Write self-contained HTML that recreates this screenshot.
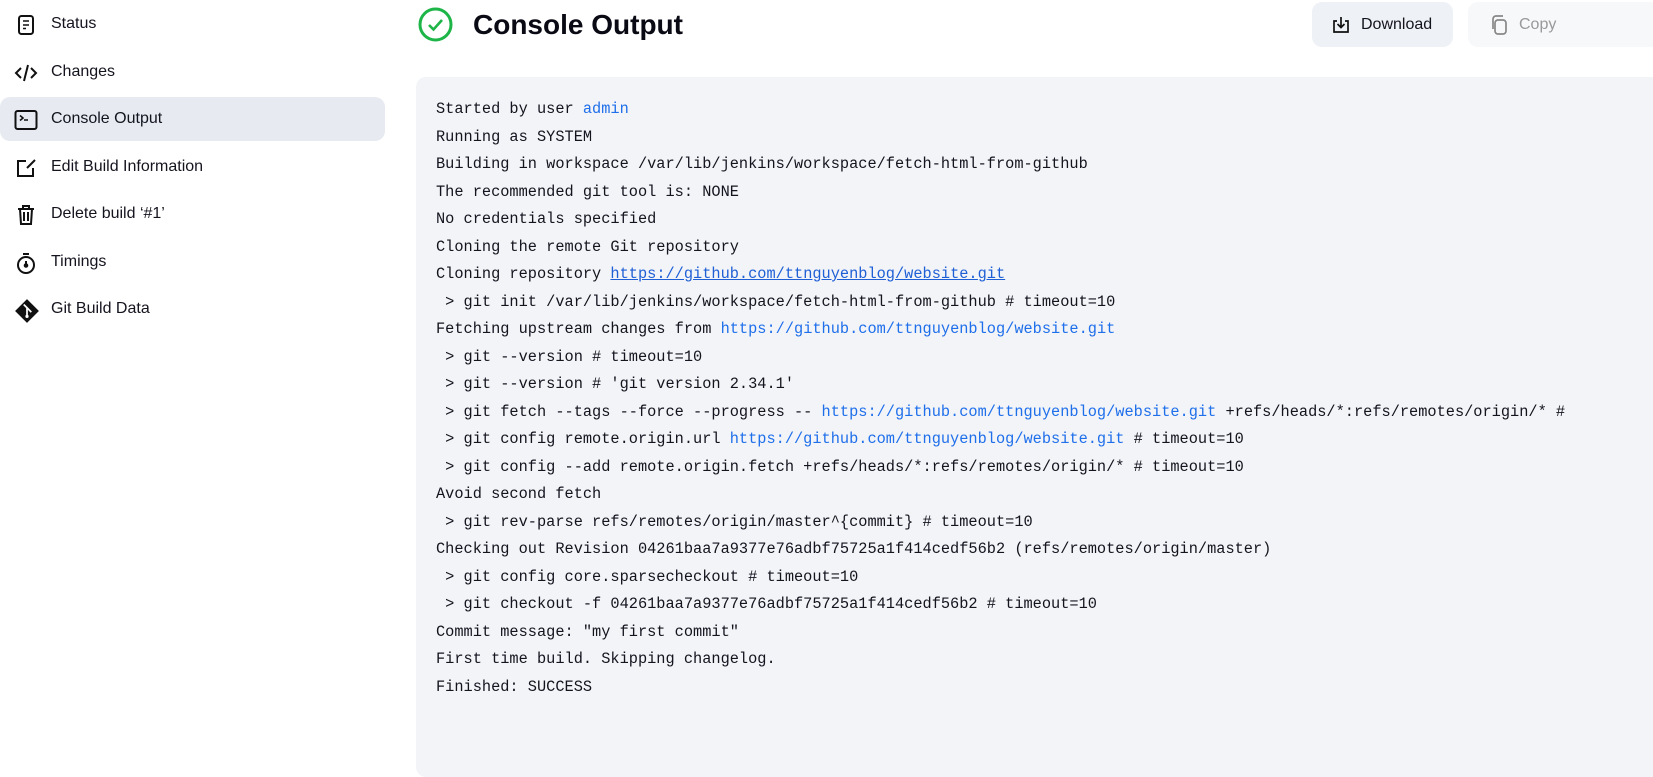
<!DOCTYPE html>
<html><head><meta charset="utf-8"><style>
*{margin:0;padding:0;box-sizing:border-box}
body{width:1653px;height:740px;overflow:hidden;background:#fff;font-family:"Liberation Sans",sans-serif;color:#1a1a1a;position:relative}
.nav{position:absolute;left:0;top:0;width:385px}
.it{position:absolute;left:0;width:385px;height:44px;display:flex;align-items:center;font-size:16px;color:#14141f}
.it svg{position:absolute;left:14px;top:11px}
.it span{position:absolute;left:51px;top:13px}
.act{background:#e7ebf1;border-radius:10px}
h1{position:absolute;left:473px;top:9px;font-size:28px;font-weight:bold;color:#0a0a14}
.btn{position:absolute;top:2px;height:45px;border-radius:10px;font-size:16px;display:flex;align-items:center}
pre{position:absolute;left:416px;top:77px;width:1300px;height:700px;background:#f2f4f7;border-radius:10px;padding:19px 20px;font-family:"Liberation Mono",monospace;font-size:15.3px;line-height:27.5px;color:#14141f}
a{color:#1f6feb;text-decoration:none}
a.u{text-decoration:underline;color:#1f5fd6}
</style></head><body>
<div class="nav">
<div class="it" style="top:2px"><svg width="24" height="24" viewBox="0 0 24 24" fill="none" stroke="#111" stroke-width="2"><rect x="5" y="3" width="14" height="18" rx="2.5"/><path d="M9 8h6M9 12h6M9 15.5h3" stroke-width="1.6"/></svg><span>Status</span></div>
<div class="it" style="top:50px"><svg width="24" height="24" viewBox="0 0 24 24" fill="none" stroke="#111" stroke-width="2"><path d="M7 7l-5 5 5 5M17 7l5 5-5 5M14 4l-4 16"/></svg><span>Changes</span></div>
<div class="it act" style="top:97px"><svg width="24" height="24" viewBox="0 0 24 24" fill="none" stroke="#111" stroke-width="2"><rect x="1.5" y="3" width="21" height="18" rx="2"/><path d="M6 7.5l3 2.5-3 2.5M10 12h4" stroke-width="1.6"/></svg><span>Console Output</span></div>
<div class="it" style="top:145px"><svg width="24" height="24" viewBox="0 0 24 24" fill="none" stroke="#111" stroke-width="2"><path d="M12 5H4v15h15v-8M13 12l8-8"/></svg><span>Edit Build Information</span></div>
<div class="it" style="top:192px"><svg width="24" height="24" viewBox="0 0 24 24" fill="none" stroke="#111" stroke-width="2"><path d="M4 6h16M9 6V3h6v3M6 6l1 15h10l1-15M10 9v9M14 9v9"/></svg><span>Delete build ‘#1’</span></div>
<div class="it" style="top:240px"><svg width="24" height="24" viewBox="0 0 24 24" fill="none" stroke="#111" stroke-width="2"><circle cx="12" cy="14" r="8"/><path d="M9 3h6M12 10v4"/><circle cx="12" cy="14.5" r="1.3" fill="#111"/></svg><span>Timings</span></div>
<div class="it" style="top:287px"><svg width="26" height="26" viewBox="0 0 24 24"><path d="M12 1l11 11-11 11L1 12z" fill="#111"/><path d="M9 6l3 3v8M12 9l4 4" stroke="#fff" stroke-width="1.6" fill="none"/><circle cx="12" cy="17" r="1.5" fill="#fff"/></svg><span>Git Build Data</span></div>
</div>
<svg style="position:absolute;left:418px;top:7px" width="35" height="35" viewBox="0 0 35 35" fill="none" stroke="#1eb548" stroke-width="3"><circle cx="17.5" cy="17.5" r="15.5"/><path d="M11 18l4.5 4.5 8.5-9.5" stroke-width="2.6"/></svg>
<h1>Console Output</h1>
<div class="btn" style="left:1312px;width:141px;background:#eef1f5;color:#14141f"><svg style="margin-left:20px" width="18" height="18" viewBox="0 0 18 18" fill="none" stroke="#111" stroke-width="1.7"><path d="M5 5H2v11h14V5h-3M9 1v10M5.5 8l3.5 3.5L12.5 8"/></svg><span style="margin-left:11px">Download</span></div>
<div class="btn" style="left:1468px;width:200px;background:#f7f8fa;color:#999"><svg style="margin-left:22px" width="18" height="20" viewBox="0 0 18 20" fill="none" stroke="#888" stroke-width="1.7"><rect x="5" y="5" width="11" height="14" rx="3"/><path d="M3 14V4a3 3 0 013-3h7"/></svg><span style="margin-left:11px">Copy</span></div>
<pre>Started by user <a>admin</a>
Running as SYSTEM
Building in workspace /var/lib/jenkins/workspace/fetch-html-from-github
The recommended git tool is: NONE
No credentials specified
Cloning the remote Git repository
Cloning repository <a class="u">https://github.com/ttnguyenblog/website.git</a>
 &gt; git init /var/lib/jenkins/workspace/fetch-html-from-github # timeout=10
Fetching upstream changes from <a>https://github.com/ttnguyenblog/website.git</a>
 &gt; git --version # timeout=10
 &gt; git --version # 'git version 2.34.1'
 &gt; git fetch --tags --force --progress -- <a>https://github.com/ttnguyenblog/website.git</a> +refs/heads/*:refs/remotes/origin/* #
 &gt; git config remote.origin.url <a>https://github.com/ttnguyenblog/website.git</a> # timeout=10
 &gt; git config --add remote.origin.fetch +refs/heads/*:refs/remotes/origin/* # timeout=10
Avoid second fetch
 &gt; git rev-parse refs/remotes/origin/master^{commit} # timeout=10
Checking out Revision 04261baa7a9377e76adbf75725a1f414cedf56b2 (refs/remotes/origin/master)
 &gt; git config core.sparsecheckout # timeout=10
 &gt; git checkout -f 04261baa7a9377e76adbf75725a1f414cedf56b2 # timeout=10
Commit message: "my first commit"
First time build. Skipping changelog.
Finished: SUCCESS</pre>
</body></html>
